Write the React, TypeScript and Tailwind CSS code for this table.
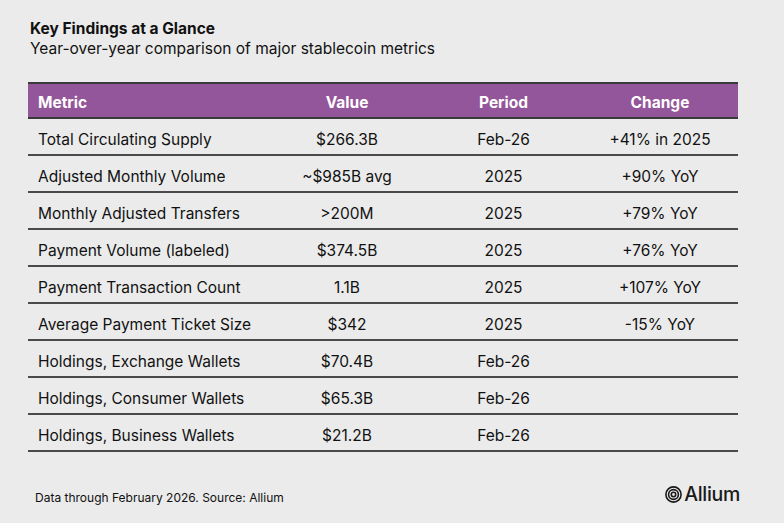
import * as React from "react";

const ROWS: { metric: string; value: string; period: string; change: string }[] = [
  { metric: "Total Circulating Supply", value: "$266.3B", period: "Feb-26", change: "+41% in 2025" },
  { metric: "Adjusted Monthly Volume", value: "~$985B avg", period: "2025", change: "+90% YoY" },
  { metric: "Monthly Adjusted Transfers", value: ">200M", period: "2025", change: "+79% YoY" },
  { metric: "Payment Volume (labeled)", value: "$374.5B", period: "2025", change: "+76% YoY" },
  { metric: "Payment Transaction Count", value: "1.1B", period: "2025", change: "+107% YoY" },
  { metric: "Average Payment Ticket Size", value: "$342", period: "2025", change: "-15% YoY" },
  { metric: "Holdings, Exchange Wallets", value: "$70.4B", period: "Feb-26", change: "" },
  { metric: "Holdings, Consumer Wallets", value: "$65.3B", period: "Feb-26", change: "" },
  { metric: "Holdings, Business Wallets", value: "$21.2B", period: "Feb-26", change: "" },
];

const HEAD = "h-[37px] pt-[4px] flex items-center bg-[#94569a] border-y-2 border-[#3a3a3a] text-white font-bold text-[15.5px]";
const CELL = "h-[37px] pt-[6px] flex items-center border-b-2 border-[#4a4a4a] text-[15.5px] text-[#111]";

function AlliumLogo() {
  return (
    <svg width="17" height="17" viewBox="0 0 17 17" fill="none" stroke="#1a1a1a" strokeWidth="1.6">
      <circle cx="8.5" cy="8.5" r="7.6" />
      <circle cx="8.5" cy="8.5" r="4.9" />
      <circle cx="8.5" cy="8.5" r="2.2" />
    </svg>
  );
}

export default function App() {
  return (
    <div
      className="w-[784px] h-[523px] bg-[#ebebeb] pl-[28px] pt-[19px] text-[#111]"
      style={{ fontFamily: "Inter, 'Noto Sans', sans-serif" }}
    >
      <div className="pl-[2px]">
        <h1 className="text-[15.5px] font-bold leading-[20px]">Key Findings at a Glance</h1>
        <p className="text-[15.5px] leading-[19px]">Year-over-year comparison of major stablecoin metrics</p>
      </div>

      <div className="mt-[24px] w-[710px] grid grid-cols-[241px_156px_157px_156px]">
        <div className={`${HEAD} pl-[10px]`}>Metric</div>
        <div className={`${HEAD} justify-center`}>Value</div>
        <div className={`${HEAD} justify-center`}>Period</div>
        <div className={`${HEAD} justify-center`}>Change</div>
        {ROWS.map((r) => (
          <React.Fragment key={r.metric}>
            <div className={`${CELL} pl-[10px]`}>{r.metric}</div>
            <div className={`${CELL} justify-center`}>{r.value}</div>
            <div className={`${CELL} justify-center`}>{r.period}</div>
            <div className={`${CELL} justify-center`}>{r.change}</div>
          </React.Fragment>
        ))}
      </div>

      <div className="mt-[28px] w-[712px] flex items-center justify-between">
        <span className="pl-[7px] pt-[3px] text-[12px]">Data through February 2026. Source: Allium</span>
        <span className="flex items-center gap-[2px] pb-[3px] text-[19.5px] font-medium tracking-[-0.3px] text-[#1a1a1a]">
          <AlliumLogo />
          Allium
        </span>
      </div>
    </div>
  );
}
